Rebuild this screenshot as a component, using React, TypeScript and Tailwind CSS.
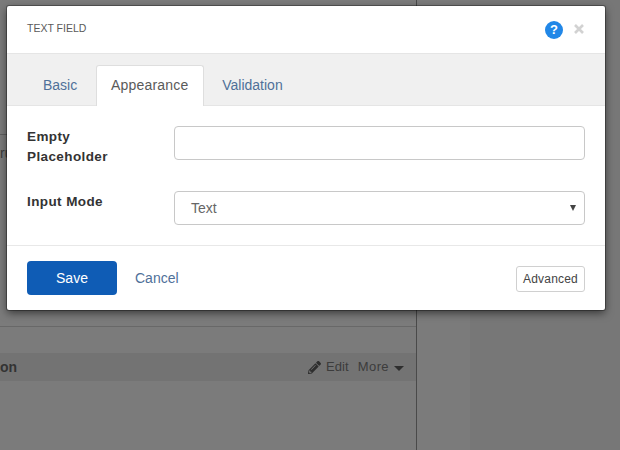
import { FaPencilAlt } from "react-icons/fa";

const font = "font-['Liberation_Sans',Arial,sans-serif]";

function Backdrop() {
  return (
    <div className="flex h-[450px] w-[620px] bg-[#777777]">
      <div className="flex w-[417px] flex-col border-r border-[#4a4a4a] bg-[#7b7b7b] pt-[134px]">
        <div className="flex h-[192px] border-t border-[#5f5f5f] pt-[8px]">
          <span className="text-[14px] leading-[20px] text-[#3c3c3c]">ru</span>
        </div>
        <div className="h-[27px] border-t border-[#686868]" />
        <div className="flex h-[28px] items-center justify-between bg-[#737373] pr-[12px] text-[13px] text-[#3c3c3c]">
          <span className="text-[14px] font-bold text-[#333333]">on</span>
          <div className="flex items-center">
            <FaPencilAlt className="mr-[5px] h-[13px] w-[13px] text-[#2e2e2e]" />
            <span className="mr-[9px] tracking-[0.1px]">Edit</span>
            <span className="mr-[5px] tracking-[0.4px]">More</span>
            <span className="mt-[2px] h-0 w-0 border-x-[5px] border-t-[5px] border-x-transparent border-t-[#2e2e2e]" />
          </div>
        </div>
      </div>
      <div className="w-[53px] bg-[#7b7b7b]" />
    </div>
  );
}

function Tab({ label, active }: { label: string; active?: boolean }) {
  if (active) {
    return (
      <div className="-mb-px flex h-[41px] w-[108px] items-center justify-center rounded-t-[3px] border-x border-t border-[#dedede] bg-white pb-[2px] pr-[1px] text-[14px] tracking-[0.2px] text-[#5a5a5a]">
        {label}
      </div>
    );
  }
  return <div className="flex h-[41px] items-center pt-[2px] text-[14px] text-[#4f7099]">{label}</div>;
}

function HelpIcon() {
  return (
    <span className="flex h-[18px] w-[18px] items-center justify-center rounded-full bg-[#2187e7] text-[13px] font-bold text-white">
      ?
    </span>
  );
}

function CloseIcon() {
  return (
    <svg width="10" height="10" viewBox="0 0 10 10" className="-mt-[2px]">
      <path d="M1 1 L9 9 M9 1 L1 9" stroke="#d2d2d2" strokeWidth="2.6" />
    </svg>
  );
}

export default function App() {
  return (
    <div className={`relative h-[450px] w-[620px] overflow-hidden ${font}`}>
      <Backdrop />

      <div className="absolute left-[7px] top-[6px] w-[598px] rounded-[2px] bg-white shadow-[0_0_0_1px_rgba(0,0,0,0.3),0_3px_9px_rgba(0,0,0,0.55)]">
        <div className="flex h-[48px] items-center justify-between border-b border-[#e5e5e5] pl-[20px] pr-[21px]">
          <span className="-mt-[2px] text-[10.5px] text-[#5a5a5a]">TEXT FIELD</span>
          <div className="flex items-center gap-[11px]">
            <HelpIcon />
            <CloseIcon />
          </div>
        </div>

        <div className="flex h-[52px] items-end border-b border-[#e5e5e5] bg-[#f0f0f0] pl-[36px]">
          <Tab label="Basic" />
          <div className="ml-[19px] mr-[18px]">
            <Tab label="Appearance" active />
          </div>
          <Tab label="Validation" />
        </div>

        <div className="flex flex-col gap-[24px] border-b border-[#e8e8e8] px-[20px] pb-[20px] pt-[20px]">
          <div className="flex">
            <label className="w-[147px] pt-[1px] text-[13.5px] font-bold leading-[20px] tracking-[0.4px] text-[#333333]">
              Empty
              <br />
              Placeholder
            </label>
            <div className="h-[34px] flex-1 rounded-[4px] border border-[#c8c8c8] bg-white" />
          </div>
          <div className="flex">
            <label className="w-[147px] pt-[1px] text-[13.5px] font-bold leading-[20px] tracking-[0.4px] text-[#333333]">
              Input Mode
            </label>
            <div className="flex h-[34px] flex-1 items-center justify-between rounded-[4px] border border-[#c8c8c8] bg-white pl-[16px] pr-[8px] text-[14px] text-[#666666]">
              <span>Text</span>
              <span className="-mt-[1px] h-0 w-0 border-x-[3px] border-t-[6px] border-x-transparent border-t-[#444444]" />
            </div>
          </div>
        </div>

        <div className="flex h-[64px] items-center justify-between px-[20px]">
          <div className="flex items-center">
            <button className="h-[34px] w-[90px] rounded-[4px] bg-[#0f5cb5] text-[14px] text-white">Save</button>
            <span className="ml-[18px] text-[14px] text-[#4f7099]">Cancel</span>
          </div>
          <button className="mt-[2px] h-[26px] w-[69px] rounded-[3px] border border-[#d0d0d0] bg-white text-[12px] tracking-[0.2px] text-[#444444]">
            Advanced
          </button>
        </div>
      </div>
    </div>
  );
}
